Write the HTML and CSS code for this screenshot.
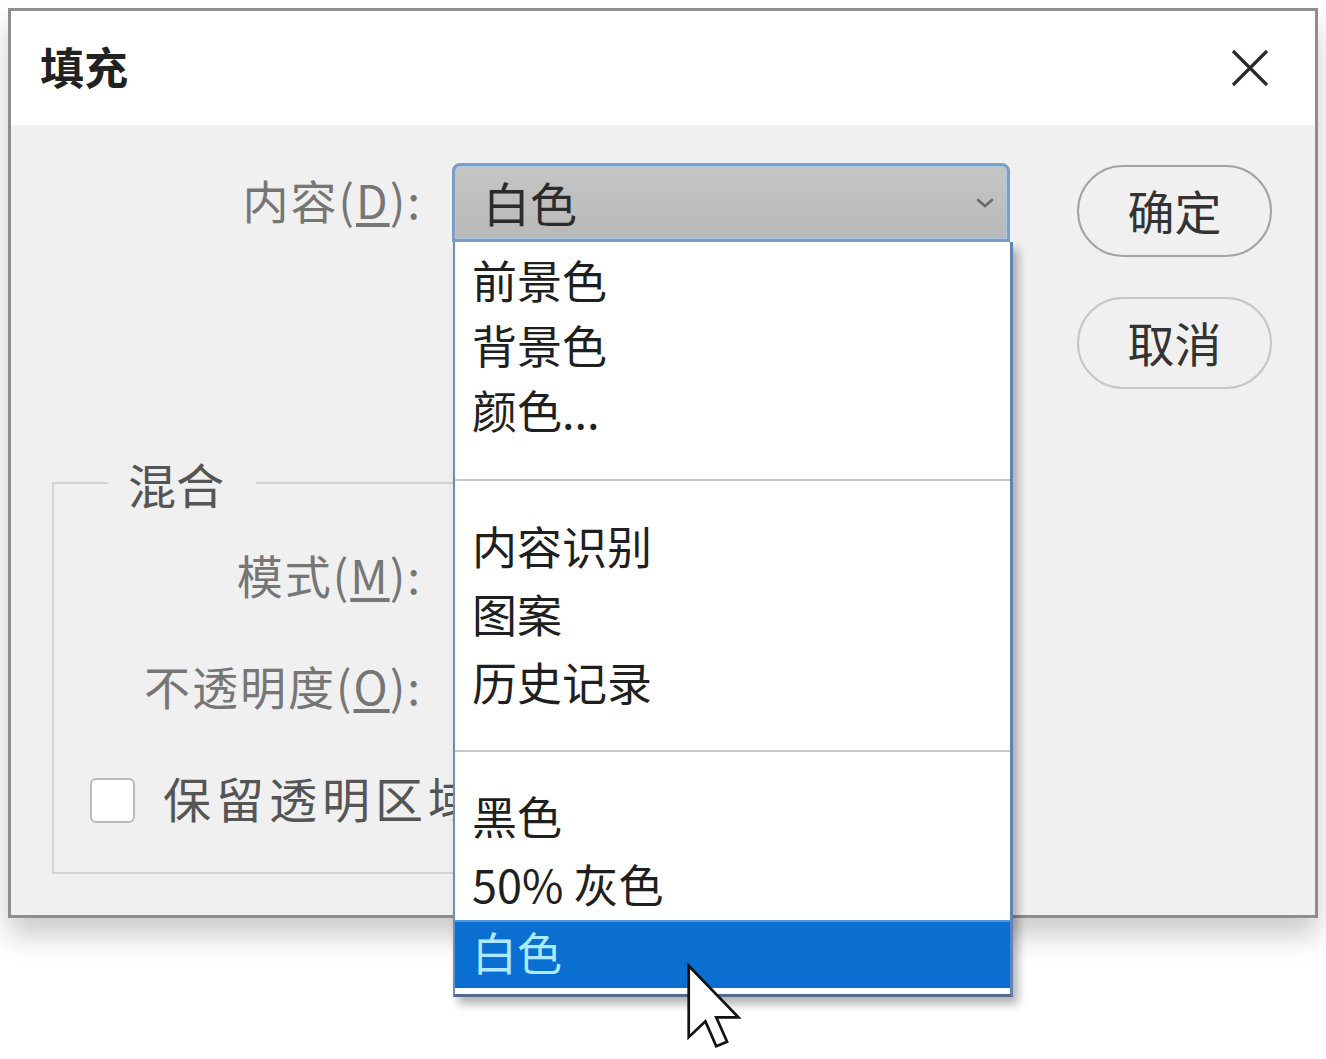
FILE: index.html
```html
<!DOCTYPE html>
<html lang="zh-CN">
<head>
<meta charset="utf-8">
<title>填充</title>
<link rel="stylesheet" href="styles.css">
</head>
<body>
<div class="dialog">
  <div class="titlebar">
    <span class="title">填充</span>
    <button class="close" aria-label="关闭">
      <svg width="40" height="40" viewBox="0 0 40 40"><path d="M3 3 L37 37 M37 3 L3 37" stroke="#2a2a2a" stroke-width="3.2" fill="none"/></svg>
    </button>
  </div>
  <div class="body">
    <div class="main">
      <div class="content-row">
        <label class="label">内容(<u>D</u>):</label>
        <div class="select-wrap">
          <div class="select">
            <span class="select-text">白色</span>
            <svg class="chev" width="20" height="12" viewBox="0 0 20 12"><path d="M3 3 L10 9 L17 3" stroke="#6a6a6a" stroke-width="2.6" fill="none" stroke-linecap="round"/></svg>
          </div>
          <div class="menu">
            <div class="grp g1">
              <div class="item">前景色</div>
              <div class="item">背景色</div>
              <div class="item">颜色...</div>
            </div>
            <div class="sep"></div>
            <div class="grp g2">
              <div class="item">内容识别</div>
              <div class="item">图案</div>
              <div class="item">历史记录</div>
            </div>
            <div class="sep"></div>
            <div class="grp g3">
              <div class="item">黑色</div>
              <div class="item">50% 灰色</div>
              <div class="item selected">白色</div>
            </div>
          </div>
        </div>
      </div>
      <fieldset class="group">
        <legend>混合</legend>
        <div class="frow"><label class="label flabel">模式(<u>M</u>):</label></div>
        <div class="frow"><label class="label flabel">不透明度(<u>O</u>):</label></div>
        <div class="frow check-row"><span class="checkbox"></span><span class="check-text">保留透明区域</span></div>
      </fieldset>
    </div>
    <div class="actions">
      <button class="btn ok">确定</button>
      <button class="btn cancel">取消</button>
    </div>
  </div>
</div>
<svg class="cursor" width="56" height="86" viewBox="0 0 12.4 19">
  <path d="M0.6 0.6 L0.6 16.4 L4.3 12.9 L6.7 18.4 L9.1 17.4 L6.7 12 L11.6 12 Z" fill="#fff" stroke="#111" stroke-width="0.6" stroke-linejoin="miter"/>
</svg>
</body>
</html>
```

FILE: styles.css
```css
html, body {
  margin: 0;
}
body {
  position: relative;
  box-sizing: border-box;
  width: 1326px;
  height: 1059px;
  padding: 8px 0 0 8px;
  overflow: hidden;
  background: #ffffff;
  font-family: "Noto Sans CJK SC", "Noto Sans", sans-serif;
}

.dialog {
  box-sizing: border-box;
  width: 1310px;
  height: 910px;
  border: 3px solid #8e8e8e;
  background: #f0f0f0;
  box-shadow: 0 18px 26px rgba(0, 0, 0, 0.2);
  display: flex;
  flex-direction: column;
}

.titlebar {
  height: 114px;
  flex: none;
  background: #ffffff;
  display: flex;
  align-items: center;
  justify-content: space-between;
  padding: 0 45px 0 29px;
}
.title {
  font-size: 44px;
  font-weight: 700;
  color: #222;
  line-height: 1;
  padding-bottom: 4px;
}
.close {
  width: 40px;
  height: 40px;
  padding: 0;
  border: 0;
  background: none;
  display: block;
}
.close svg { display: block; }

.body {
  flex: 1;
  display: flex;
  padding: 38px 43px 0 0;
}
.main {
  flex: 1;
}
.actions {
  width: 195px;
  flex: none;
  display: flex;
  flex-direction: column;
  gap: 40px;
  padding-top: 2px;
}

.content-row {
  display: flex;
  align-items: center;
  gap: 30px;
  height: 79px;
}
.label {
  width: 411px;
  flex: none;
  text-align: right;
  font-size: 46px;
  line-height: 1;
  color: #767676;
  letter-spacing: 2px;
  padding-bottom: 8px;
}
.label u {
  text-underline-offset: 4px;
}

.select-wrap {
  position: relative;
  width: 558px;
  height: 79px;
}
.select {
  box-sizing: border-box;
  height: 79px;
  border: 3px solid #7b9ec6;
  border-radius: 8px 8px 0 0;
  background: linear-gradient(#c5c5c5, #b9b9b9);
  box-shadow: inset 0 0 0 1px #abc8e4;
  display: flex;
  align-items: center;
  justify-content: space-between;
  padding: 0 12px 0 28px;
}
.select-text {
  font-size: 47px;
  line-height: 1;
  color: #2b2b2b;
  padding-bottom: 2px;
}
.chev { display: block; }

.menu {
  position: absolute;
  left: 1px;
  top: 79px;
  z-index: 2;
  box-sizing: border-box;
  width: 560px;
  height: 755px;
  padding: 7px 0 6px;
  background: #ffffff;
  border-left: 2px solid #6d8ec2;
  border-right: 3px solid #6382b6;
  border-bottom: 3px solid #56698a;
  box-shadow: 5px 7px 9px rgba(0, 0, 0, 0.3);
}
.item {
  box-sizing: border-box;
  height: 65px;
  display: flex;
  align-items: center;
  padding-left: 17px;
  padding-bottom: 5px;
  font-size: 45px;
  line-height: 1;
  color: #1f1f1f;
}
.g2 .item, .g3 .item {
  height: 68px;
}
.item.selected {
  background: #0a6fd1;
  color: #aeeaff;
  box-shadow: inset 0 2px 0 #4f98dc;
}
.sep {
  height: 2px;
  background: #c8c8c8;
  margin: 35px 0 33px;
}
.g2 + .sep {
  margin: 32px 0 32px;
}

.group {
  margin: 211px 0 0 41px;
  width: 948px;
  min-width: 0;
  box-sizing: border-box;
  border: 2px solid #d3d3d3;
  padding: 35px 0 42px;
}
.group legend {
  margin-left: 54px;
  padding: 0 32px 0 20px;
  font-size: 48px;
  line-height: 60px;
  color: #555;
}
.frow {
  display: flex;
  align-items: center;
  height: 60px;
}
.frow + .frow {
  margin-top: 51px;
}
.flabel {
  width: 368px;
}
.check-row {
  padding-left: 36px;
  gap: 28px;
}
.checkbox {
  width: 45px;
  height: 45px;
  flex: none;
  box-sizing: border-box;
  border: 2px solid #bababa;
  border-radius: 6px;
  background: #ffffff;
}
.check-text {
  font-size: 48px;
  line-height: 1;
  letter-spacing: 5px;
  color: #555;
  white-space: nowrap;
  padding-bottom: 6px;
}

.btn {
  box-sizing: border-box;
  width: 195px;
  height: 92px;
  padding: 0 0 4px;
  border-radius: 46px;
  border: 2px solid #a3a3a3;
  background: #f0f0f0;
  font-family: "Noto Sans CJK SC", "Noto Sans", sans-serif;
  font-size: 47px;
  color: #333;
}
.btn.cancel {
  border-color: #c6c6c6;
}

.cursor {
  position: absolute;
  left: 686px;
  top: 963px;
  z-index: 5;
}
```
